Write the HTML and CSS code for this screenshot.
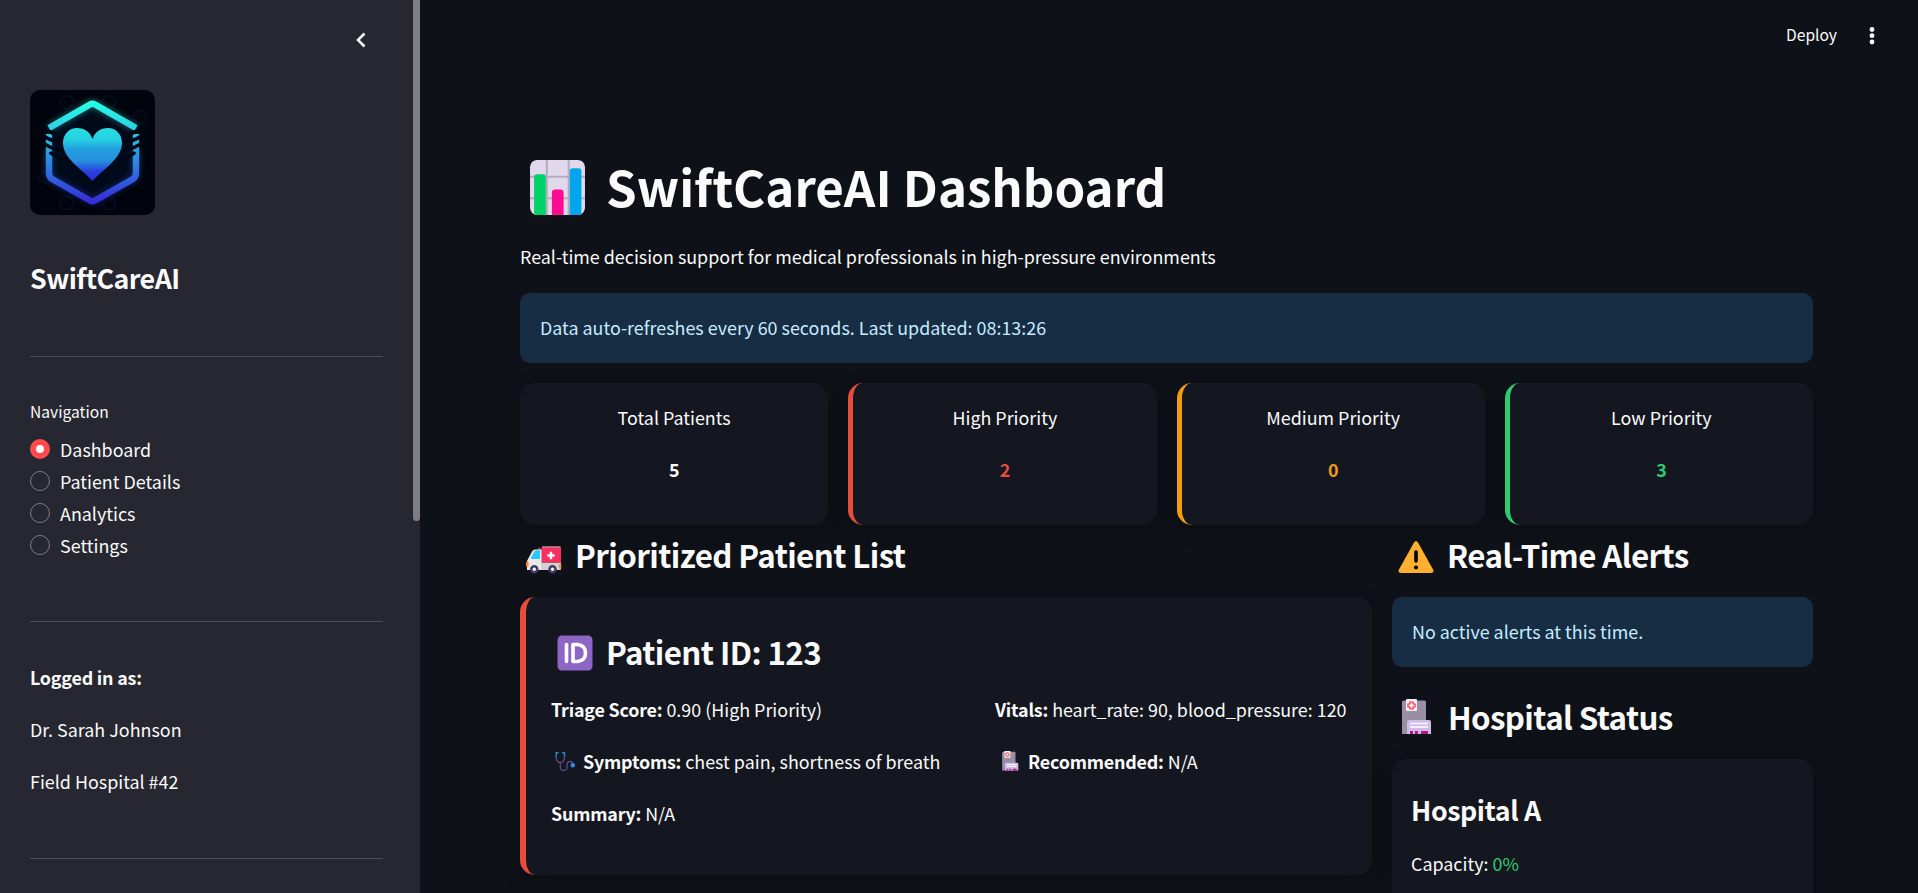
FILE: index.html
```html
<!DOCTYPE html>
<html lang="en">
<head>
<meta charset="utf-8">
<title>SwiftCareAI Dashboard</title>
<link rel="stylesheet" href="styles.css">
</head>
<body>
<div class="app">
  <aside class="sidebar">
    <div class="sidebar-content">
      <div class="collapse-row">
        <svg class="chevron" viewBox="0 0 12 16"><path d="M9.500 1.500 L3 8 L9.500 14.500"/></svg>
      </div>
      <svg class="logo" viewBox="0 0 125 125">
        <defs>
          <linearGradient id="hexGrad" gradientUnits="userSpaceOnUse" x1="0" y1="12" x2="0" y2="113">
            <stop offset="0" stop-color="#27ffe6"/><stop offset=".25" stop-color="#2ed3e2"/><stop offset=".5" stop-color="#2c9be0"/><stop offset=".75" stop-color="#3161e0"/><stop offset="1" stop-color="#352ad6"/>
          </linearGradient>
          <linearGradient id="heartGrad" x1="0" y1="0" x2="0" y2="1">
            <stop offset="0" stop-color="#27dfe2"/><stop offset=".22" stop-color="#25cfe1"/><stop offset=".4" stop-color="#239fe0"/><stop offset=".62" stop-color="#2592df"/><stop offset=".82" stop-color="#2a3fdf"/><stop offset="1" stop-color="#332bd8"/>
          </linearGradient>
          <filter id="glow" x="-30%" y="-30%" width="160%" height="160%"><feGaussianBlur stdDeviation="3.500"/></filter>
        </defs>
        <rect width="125" height="125" fill="#01040c"/>
        <g fill="none" stroke="#020d20" stroke-width="2"><circle cx="36.500" cy="12" r="6.500"/><circle cx="79" cy="12" r="6.500"/><circle cx="110" cy="27" r="6.500"/><circle cx="15" cy="87" r="6"/><circle cx="36.500" cy="113" r="6.500"/><circle cx="79" cy="113" r="6.500"/></g>
        <path d="M62.500 14 L106 40 V86 L62.500 111 L19 86 V40 Z" fill="#010a1a"/>
        <g fill="none" stroke="url(#hexGrad)" stroke-linejoin="round">
          <path filter="url(#glow)" opacity=".5" stroke-width="6" d="M19 38 L60 14.500 Q62.500 13 65 14.500 L106 38 M106 60 V83 Q106 87 103 89 L65 110.500 Q62.500 112 60 110.500 L22 89 Q19 87 19 83 V60"/>
          <path stroke-width="6.400" d="M19 38 L60 14.500 Q62.500 13 65 14.500 L106 38 M106 44 V83 Q106 87 103 89 L65 110.500 Q62.500 112 60 110.500 L22 89 Q19 87 19 83 V44"/>
        </g>
        <g fill="none" stroke="#010815" stroke-width="3.600"><path d="M8 32 Q14 42 30 45 M9 42 Q16 50 32 53 M12 52 Q19 58 32 61 M20 62 Q23 66 32 68"/><path d="M117 32 Q111 42 95 45 M116 42 Q109 50 93 53 M113 52 Q106 58 93 61 M105 62 Q102 66 93 68"/></g>
        <path fill="url(#heartGrad)" d="M62.500 91 C58 86 53 82 46 75.500 C39 68.500 33 62 33 53 C33 44 39.500 38 47 38 C55 38 60 42 62.500 49 C65 42 70 38 78 38 C85.500 38 92 44 92 53 C92 62 86 68.500 79 75.500 C72 82 67 86 62.500 91 Z"/>
      </svg>
      <h2 class="brand">SwiftCareAI</h2>
      <hr class="rule">
      <div class="nav-label">Navigation</div>
      <nav class="nav">
        <label class="nav-item"><span class="radio radio-on"></span><span>Dashboard</span></label>
        <label class="nav-item"><span class="radio"></span><span>Patient Details</span></label>
        <label class="nav-item"><span class="radio"></span><span>Analytics</span></label>
        <label class="nav-item"><span class="radio"></span><span>Settings</span></label>
      </nav>
      <hr class="rule rule-second">
      <div class="account">
        <p><strong>Logged in as:</strong></p>
        <p>Dr. Sarah Johnson</p>
        <p>Field Hospital #42</p>
      </div>
      <hr class="rule rule-third">
    </div>
    <div class="scroll-track"><div class="scroll-thumb"></div></div>
  </aside>

  <main class="main">
    <header class="toolbar">
      <span class="deploy">Deploy</span>
      <svg class="kebab" viewBox="0 0 6 20"><circle cx="3" cy="3.500" r="2.400"/><circle cx="3" cy="9.700" r="2.400"/><circle cx="3" cy="16" r="2.400"/></svg>
    </header>
    <div class="content">
      <h1 class="title">
        <svg class="title-icon" viewBox="0 0 56 56">
          <rect x="1" y="1" width="54" height="54" rx="7" fill="#e1d8ec"/>
          <path d="M17.500 1v54M39 1v54M1 17.500h54M1 38.500h54" stroke="#b4acbc" stroke-width="2"/>
          <path fill="#00d26a" d="M5 54.500V18q0-3 3-3h6q2.500 0 2.500 3v37H8z"/>
          <path fill="#fc0c90" d="M22.500 55V33q0-3 3-3h5.500q3 0 3 3v22z"/>
          <path fill="#00a6ed" d="M40 55V12q0-3 3-3h5.500q3 0 3 3v42l-3 1z"/>
        </svg>
        <span>SwiftCareAI Dashboard</span>
      </h1>
      <p class="subtitle">Real-time decision support for medical professionals in high-pressure environments</p>
      <div class="notice">Data auto-refreshes every 60 seconds. Last updated: 08:13:26</div>

      <section class="stats">
        <div class="card stat"><span>Total Patients</span><strong>5</strong></div>
        <div class="card stat stat-high"><span>High Priority</span><strong>2</strong></div>
        <div class="card stat stat-medium"><span>Medium Priority</span><strong>0</strong></div>
        <div class="card stat stat-low"><span>Low Priority</span><strong>3</strong></div>
      </section>

      <div class="columns">
        <section class="patients">
          <h2 class="heading">
            <svg class="ambulance-icon" viewBox="0 0 36 28">
              <path d="M11 4l1.500-2.200h2V5z" fill="#c9303a"/>
              <path d="M1 24V15L6 5.500Q7 3.500 9 3.500h7V24z" fill="#e9e9e9"/>
              <path d="M5 11.500L8.300 5.500Q9 4.300 10.500 4.300H14V12q0 1-1 1H6q-1.600 0-1-1.500z" fill="#26c9fc"/>
              <path d="M15 16.500h20V23q0 1-1 1H15z" fill="#d3d3d3"/>
              <path d="M15.500 2q0-1.500 1.500-1.500h16.500Q35 .500 35 2v14.500H15.500z" fill="#f92f60"/>
              <path d="M16 1h18.500" stroke="#a79fae" stroke-width="1.200"/>
              <path d="M25 5.800v7.400M21.300 9.500h7.400" stroke="#fff" stroke-width="2.400"/>
              <rect x="0" y="15.500" width="2.600" height="5.500" rx="1.200" fill="#ff822d"/><rect x="33" y="18" width="2.400" height="4.500" rx="1" fill="#ff822d"/>
              <g fill="#fff" stroke="#433b6b" stroke-width="2.600"><circle cx="8.300" cy="23.300" r="3"/><circle cx="26.500" cy="23.300" r="3"/></g>
            </svg>
            <span>Prioritized Patient List</span>
          </h2>
          <article class="card patient">
            <h3 class="patient-title">
              <svg class="id-icon" viewBox="0 0 36 36"><rect x=".5" y=".5" width="35" height="35" rx="4.500" fill="#8d65c5"/><path d="M9.500 9.500v17M16 9.500v17h4.500q8-1 8-8.500t-8-8.500z" fill="none" stroke="#fff" stroke-width="3.600" stroke-linecap="round" stroke-linejoin="round"/></svg>
              <span>Patient ID: 123</span>
            </h3>
            <div class="details">
              <div class="detail-column">
                <p><strong>Triage Score:</strong> 0.90 (High Priority)</p>
                <p class="with-icon">
                  <svg class="steth-icon" viewBox="0 0 22 21"><g fill="none" stroke-linecap="round"><path d="M4 1.800H2.200V6M8.500 1.800h2V6" stroke="#1a8fc4" stroke-width="1.400"/><path d="M2.200 6q0 5.500 4.100 5.500T10.500 6M6.300 11.500V16q0 3.500 3.400 3.500T13 16v-2q0-3.500 3-3.500 2.300 0 3 2" stroke="#5b4b80" stroke-width="1.300"/></g><circle cx="18.800" cy="14.200" r="2.200" fill="#2690f5"/></svg>
                  <span><strong>Symptoms:</strong> chest pain, shortness of breath</span>
                </p>
                <p><strong>Summary:</strong> N/A</p>
              </div>
              <div class="detail-column">
                <p class="vitals"><strong>Vitals:</strong> heart_rate: 90, blood_pressure: 120</p>
                <p class="with-icon">
                  <svg class="hospital-small" viewBox="0 0 30 36"><use href="#hospital"/></svg>
                  <span><strong>Recommended:</strong> N/A</span>
                </p>
              </div>
            </div>
          </article>
        </section>

        <section class="status">
          <h2 class="heading">
            <svg class="heading-icon" viewBox="0 0 36 36"><path d="M16 3.500q2-3 4 0L35 30.500q1.500 3.500-2 3.500H3q-3.500 0-2-3.500z" fill="#ffb02e"/><path d="M18 13v9" stroke="#000" stroke-width="3.600" stroke-linecap="round"/><circle cx="18" cy="28.500" r="2.100"/></svg>
            <span>Real-Time Alerts</span>
          </h2>
          <div class="notice">No active alerts at this time.</div>
          <h2 class="heading hospital-heading">
            <svg class="hospital-icon" viewBox="0 0 30 36">
              <g id="hospital">
                <path d="M0 35V3q0-1.500 1.500-1.500h21Q24 1.500 24 3v32z" fill="#998ea4"/>
                <rect x="4" y="0" width="11" height="12" rx="1" fill="#f3eef8"/>
                <path d="M8 3h3v2h2v3h-2v2H8V8H6V5h2z" fill="#f3eef8" stroke="#f8312f" stroke-width="1.200"/>
                <path d="M5 35V24q0-3 2-3h20q2 0 2 2v12z" fill="#cdbbe9"/>
                <path d="M8 24.500h18M8 28h18" stroke="#f3eef8" stroke-width="2"/>
                <path d="M8 32h3v3H8zM13 32h3v3h-3zM19 32h7v3h-7z" fill="#b4187f"/>
              </g>
            </svg>
            <span>Hospital Status</span>
          </h2>
          <article class="card hospital">
            <h3 class="hospital-name">Hospital A</h3>
            <p>Capacity: <span class="capacity">0%</span></p>
          </article>
        </section>
      </div>
    </div>
  </main>
</div>
</body>
</html>
```
FILE: styles.css
```css
* { box-sizing: border-box; }
html, body { margin: 0; height: 100%; overflow: hidden; }
body {
  background: #0e1117;
  color: #fafafa;
  font-family: "Noto Sans CJK SC", "Noto Sans", sans-serif;
  font-size: 17.9px;
  line-height: 32px;
  white-space: nowrap;
}
h1, h2, h3, p { margin: 0; font-weight: 600; }
p { font-weight: 400; }
strong { font-weight: 600; letter-spacing: -.2px; }
svg { display: block; flex: none; }

.app { display: flex; height: 893px; }

/* Sidebar */
.sidebar { display: flex; flex: none; width: 420px; background: #262730; }
.sidebar-content { width: 413px; padding: 0 30px; }
.collapse-row { display: flex; justify-content: flex-end; height: 90px; padding: 32px 16px 0 0; }
.chevron { width: 12px; height: 16px; fill: none; stroke: #fafafa; stroke-width: 2.5; }
.logo { width: 125px; height: 125px; border-radius: 10px; overflow: hidden; }
.brand { margin-top: 45px; font-size: 26.8px; line-height: 36px; letter-spacing: -.55px; font-feature-settings: "liga" 1; }
.rule { width: 353px; height: 1px; margin: 60px 0 0; border: 0; background: #4c4d55; }
.nav-label { margin-top: 41px; font-size: 15.6px; line-height: 26px; }
.nav { margin-top: 9px; }
.nav-item { display: flex; align-items: center; gap: 10px; height: 32px; }
.radio { width: 20px; height: 20px; border: 1.5px solid #7c7d84; border-radius: 50%; }
.radio-on { background: #fafafa; border: 6px solid #ff4b4b; }
.rule-second { margin-top: 60px; }
.account { display: flex; flex-direction: column; gap: 20px; margin-top: 39px; }
.rule-third { margin-top: 61px; }
.scroll-track { width: 7px; }
.scroll-thumb { height: 521px; border-radius: 0 0 4px 4px; background: #7f7c82; }

/* Main area */
.main { flex: 1; min-width: 0; }
.toolbar { display: flex; justify-content: flex-end; align-items: center; gap: 32px; height: 71px; padding-right: 43px; }
.deploy { margin-bottom: 3px; font-size: 15.6px; }
.kebab { width: 6px; height: 20px; fill: #fafafa; }
.content { width: 1393px; padding: 80px 0 0 100px; }
.title { display: flex; align-items: center; height: 70px; font-size: 49.2px; line-height: 70px; font-weight: 700; }
.title-icon { width: 57px; height: 57px; margin: 3px 20px 0 9px; }
.subtitle { margin-top: 19px; }
.notice { height: 70px; margin-top: 21px; padding: 18px 20px; border-radius: 10px; background: #172d43; color: #c7ebff; }

.card { border-radius: 15px; background: #14171f; box-shadow: 0 5px 18px rgba(0, 0, 0, .2); }
.stats { display: grid; grid-template-columns: repeat(4, 1fr); gap: 20px; margin-top: 20px; }
.stat { display: flex; flex-direction: column; align-items: center; gap: 20px; height: 142px; padding-top: 18px; }
.stat-high { border-left: 5px solid #e74c3c; }
.stat-medium { border-left: 5px solid #f39c12; }
.stat-low { border-left: 5px solid #2ecc71; }
.stat-high strong { color: #e74c3c; }
.stat-medium strong { color: #f39c12; }
.stat-low strong { color: #2ecc71; }

.columns { display: grid; grid-template-columns: 852px 421px; gap: 20px; }
.heading { display: flex; align-items: center; height: 42px; margin-top: 9px; font-size: 31.3px; line-height: 42px; letter-spacing: -.6px; }
.heading-icon { width: 36px; height: 36px; margin: 4px 13px 0 6px; }
.ambulance-icon { width: 36px; height: 28px; margin: 9px 13px 0 6px; }
.patient { height: 278px; margin-top: 21px; padding: 34px 25px 0; border-left: 6px solid #e74c3c; }
.patient-title { display: flex; align-items: center; height: 42px; font-size: 31.3px; line-height: 42px; letter-spacing: -.6px; }
.id-icon { width: 36px; height: 36px; margin: 1px 13px 0 6px; }
.details { display: grid; grid-template-columns: 424px 1fr; gap: 20px; margin-top: 20px; }
.detail-column { display: flex; flex-direction: column; gap: 20px; }
.with-icon { display: flex; align-items: center; }
.steth-icon { width: 22px; height: 21px; margin: 0 7px 0 3px; }
.hospital-small { width: 17px; height: 20px; margin: 0 9px 0 7px; }

.status .notice { margin-top: 21px; }
.hospital-heading { margin-top: 29px; }
.hospital-icon { width: 30px; height: 36px; margin: 0 16px 0 10px; }
.hospital { height: 160px; margin-top: 21px; padding: 32px 19px 0; }
.hospital-name { font-size: 26.8px; line-height: 38px; letter-spacing: -.4px; }
.hospital p { margin-top: 18px; }
.capacity { color: #2ecc71; }
```
